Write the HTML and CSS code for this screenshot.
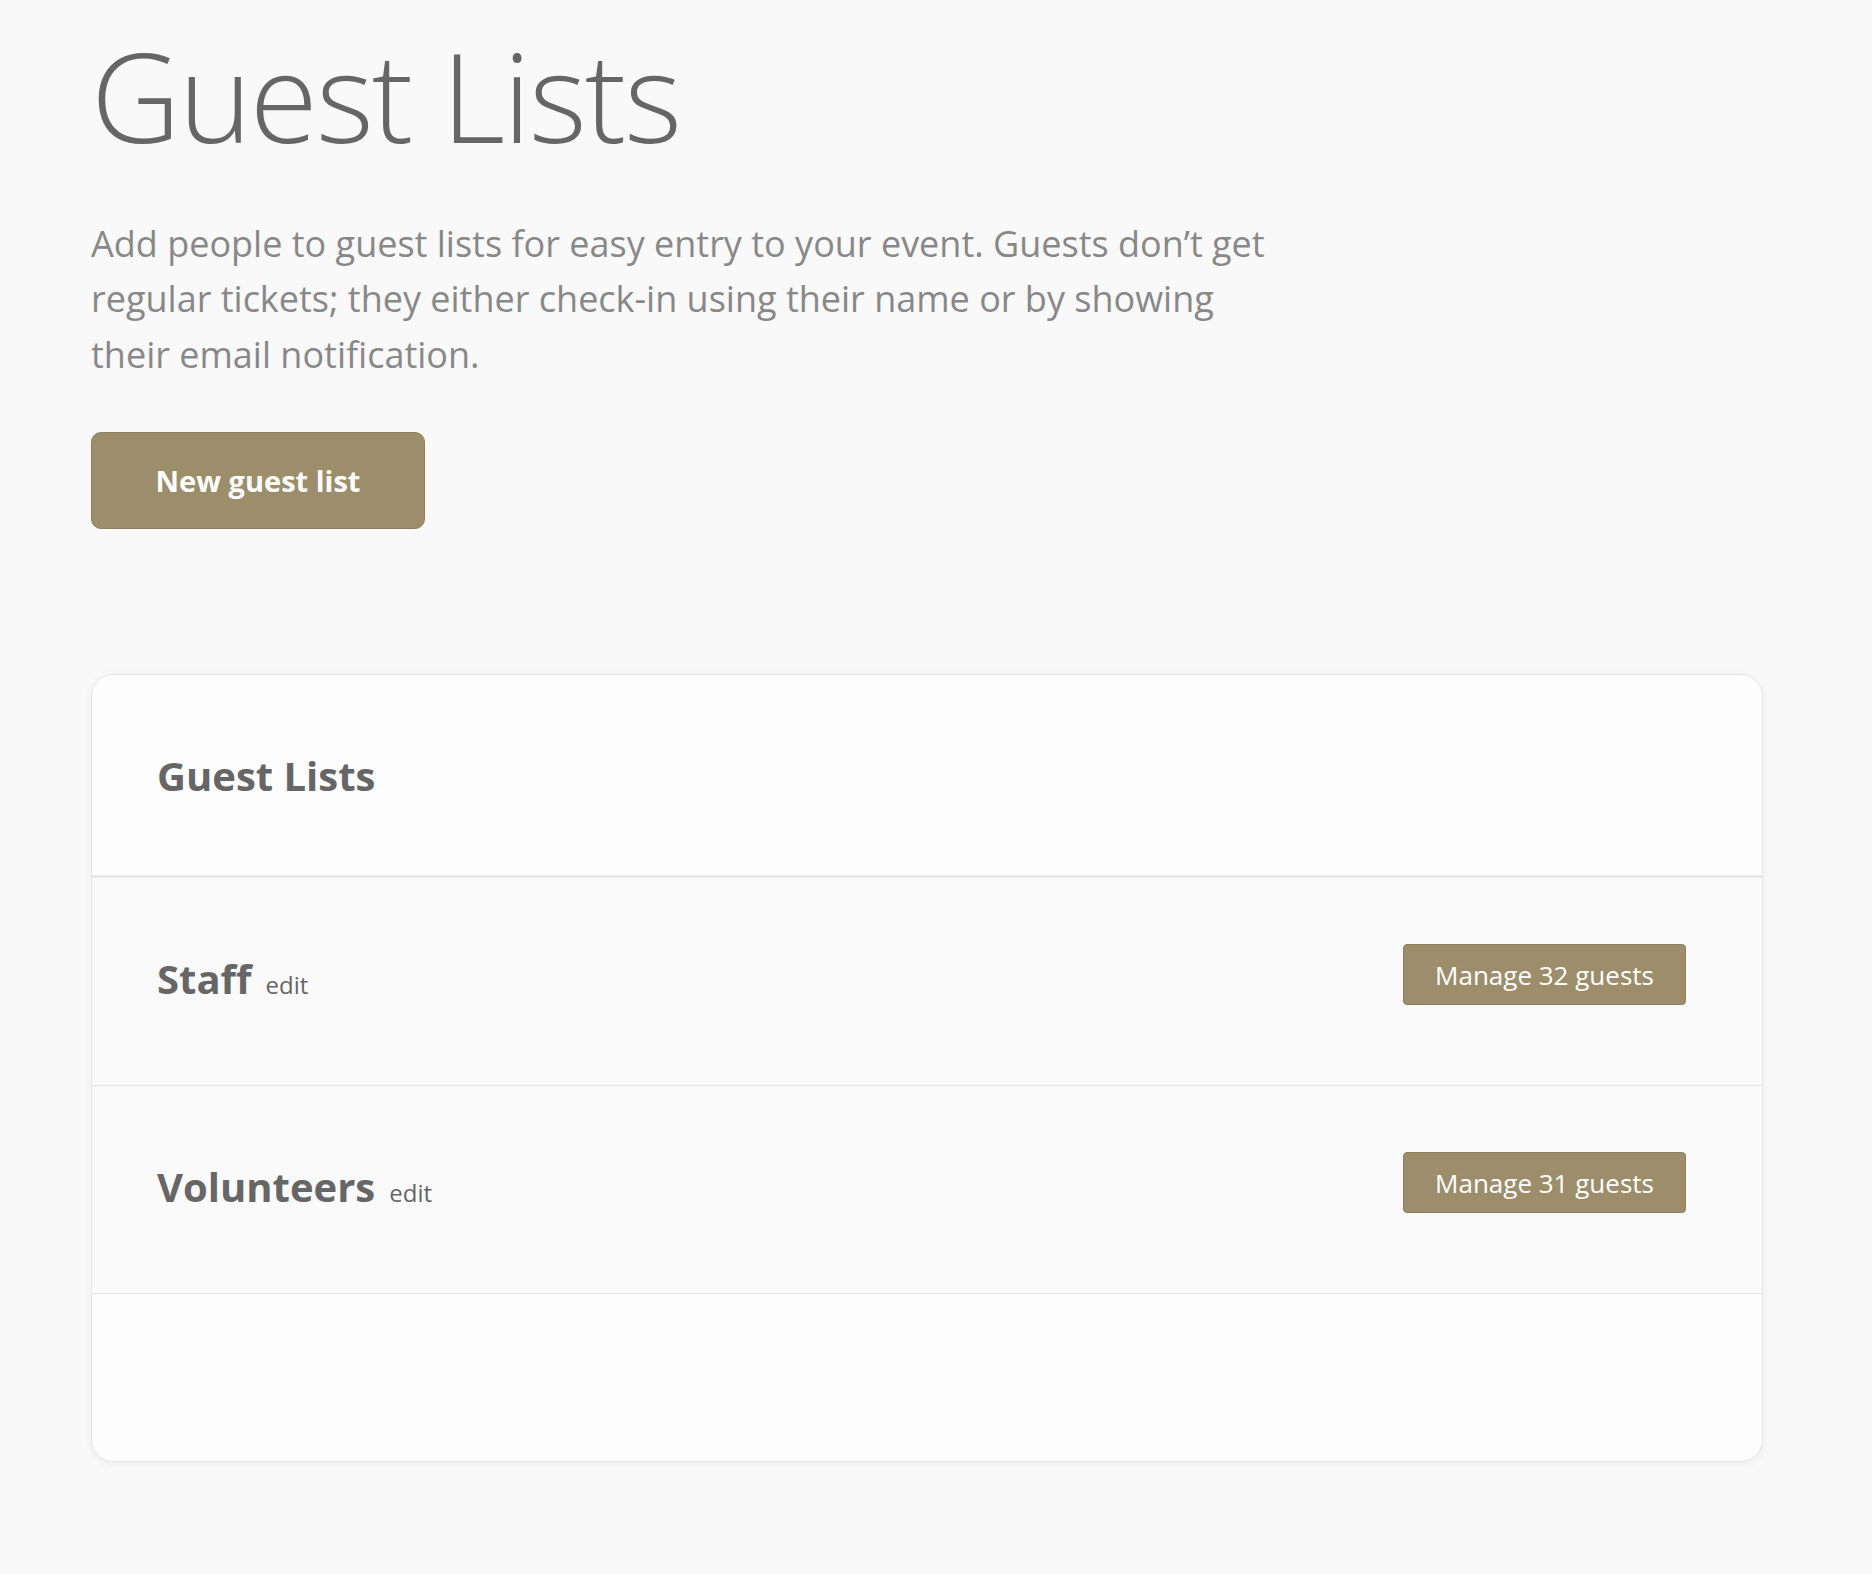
FILE: index.html
```html
<!DOCTYPE html>
<html lang="en">
<head>
<meta charset="utf-8">
<title>Guest Lists</title>
<link rel="stylesheet" href="styles.css">
</head>
<body>
<main class="page">
  <h1 class="page-title">Guest Lists</h1>
  <p class="intro">Add people to guest lists for easy entry to your event. Guests don’t get regular tickets; they either check-in using their name or by showing their email notification.</p>
  <button class="btn-primary" type="button">New guest list</button>

  <section class="card">
    <header class="card-header">
      <h2 class="card-title">Guest Lists</h2>
    </header>
    <div class="list-row">
      <div class="list-name"><span class="name">Staff</span><a class="edit" href="#">edit</a></div>
      <button class="btn-manage" type="button">Manage 32 guests</button>
    </div>
    <div class="list-row">
      <div class="list-name"><span class="name">Volunteers</span><a class="edit" href="#">edit</a></div>
      <button class="btn-manage" type="button">Manage 31 guests</button>
    </div>
    <div class="card-footer"></div>
  </section>
</main>
</body>
</html>
```

FILE: styles.css
```css
html, body {
  margin: 0;
  padding: 0;
  background: #f9f9f9;
}

body {
  font-family: "Open Sans", "Liberation Sans", sans-serif;
  color: #666;
}

.page {
  padding: 21px 109px 112px 91px;
}

.page-title {
  margin: 0;
  font-size: 124px;
  font-weight: 300;
  line-height: 1.2;
  color: #666;
  letter-spacing: -2px;
}

.intro {
  margin: 46px 0 0 0;
  max-width: 1188px;
  font-size: 36px;
  line-height: 55.5px;
  color: #888;
}

.btn-primary {
  display: block;
  margin-top: 50px;
  width: 334px;
  height: 97px;
  border: 1px solid #8c7f5d;
  border-radius: 10px;
  background: #9c8e6b;
  color: #fff;
  font-family: "Open Sans", "Liberation Sans", sans-serif;
  font-weight: 700;
  font-size: 29px;
  cursor: pointer;
}

.card {
  margin-top: 145px;
  background: #fdfdfd;
  border: 1px solid #e6e6e6;
  border-radius: 22px;
  box-shadow: 0 2px 8px rgba(0, 0, 0, 0.05);
  overflow: hidden;
}

.card-header {
  height: 200px;
  display: flex;
  align-items: center;
  padding: 0 65px;
  border-bottom: 3px solid #e8e8e8;
}

.card-title {
  margin: 0;
  font-size: 40px;
  font-weight: 700;
  color: #666;
}

.list-row {
  display: flex;
  justify-content: space-between;
  align-items: flex-start;
  height: 208px;
  box-sizing: border-box;
  padding: 66px 76px 0 65px;
  background: #fafafa;
  border-bottom: 1px solid #e6e6e6;
}

.list-name {
  margin-top: 5px;
  line-height: 60px;
  display: flex;
  align-items: baseline;
}

.name {
  font-size: 40px;
  font-weight: 700;
  color: #666;
}

.edit {
  margin-left: 14px;
  font-size: 24px;
  color: #666;
  text-decoration: none;
}

.btn-manage {
  width: 283px;
  height: 61px;
  border: 1px solid #8c7f5d;
  border-radius: 4px;
  background: #9c8e6b;
  color: #fff;
  font-family: "Open Sans", "Liberation Sans", sans-serif;
  font-size: 26px;
  cursor: pointer;
}

.card-footer {
  height: 167px;
}
```
